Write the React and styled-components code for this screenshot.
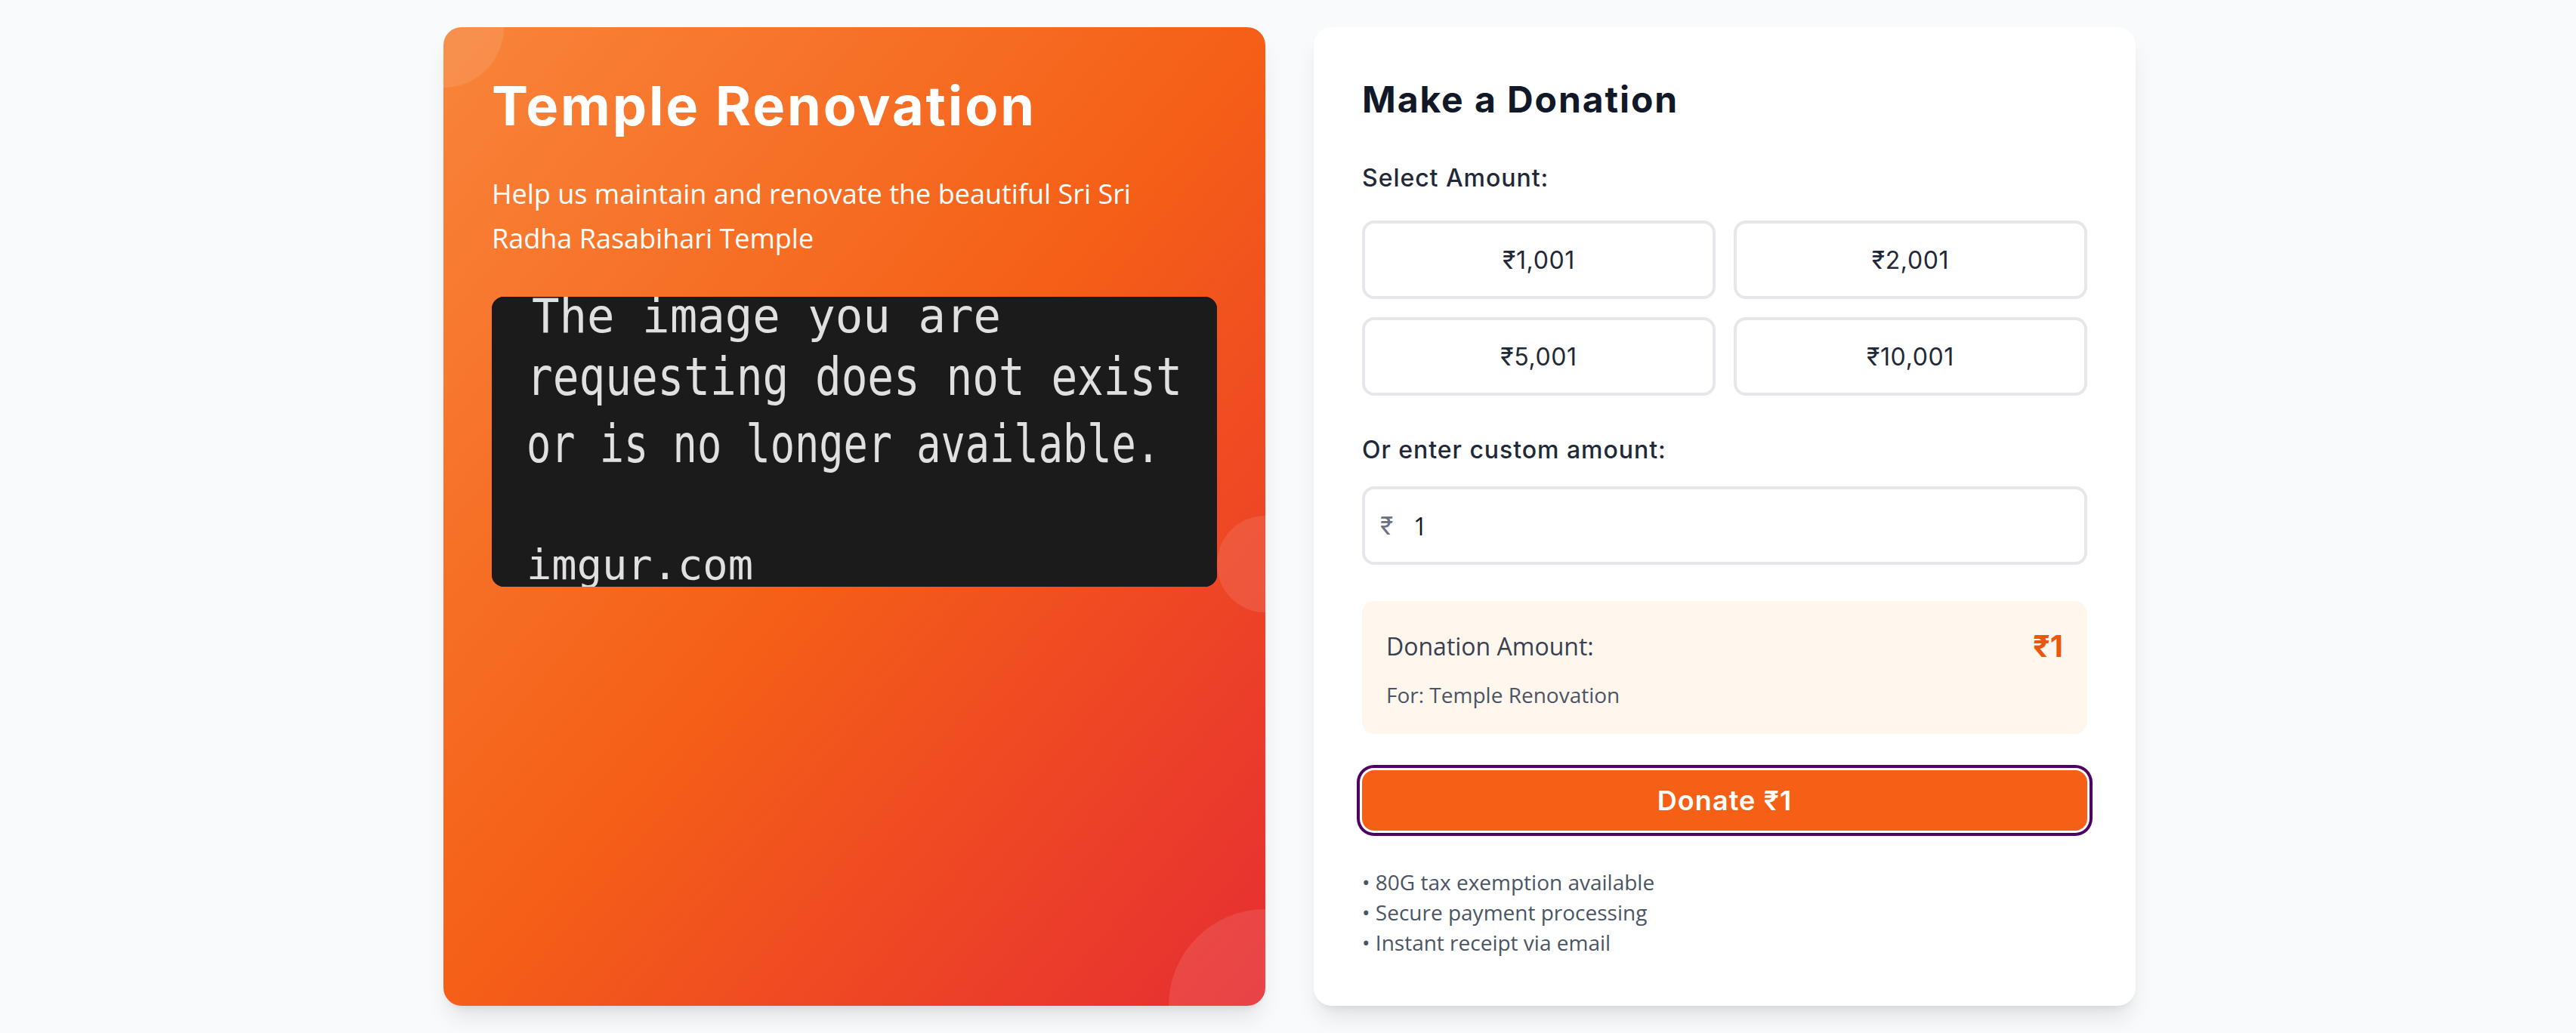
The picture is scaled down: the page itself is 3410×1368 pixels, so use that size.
import React from "react";
import styled, { createGlobalStyle } from "styled-components";

const HEAD = `"Inter", "Noto Sans", sans-serif`;
const BODY = `"Open Sans", "Noto Sans", sans-serif`;

const GlobalStyle = createGlobalStyle`
  * { box-sizing: border-box; }
  html, body {
    margin: 0;
    padding: 0;
    background: #f9fafb;
  }
  body {
    font-family: ${BODY};
  }
`;

const amounts = ["₹1,001", "₹2,001", "₹5,001", "₹10,001"];

// lines of the broken imgur placeholder, in image coordinates
// (glyphs drawn at 56px and stretched up to the tall pixel-font look)
const placeholderLines = [
  { text: "The image you are", x: 53, y: 47, w: 621, sy: 1.12 },
  { text: "requesting does not exist", x: 46, y: 130, w: 868, sy: 1.25 },
  { text: "or is no longer available.", x: 46, y: 219, w: 839, sy: 1.25 },
  { text: "imgur.com", x: 46, y: 374, w: 300, sy: 1.0 },
];

const Page = styled.div`
  display: grid;
  grid-template-columns: 1088px 1088px;
  column-gap: 64px;
  justify-content: center;
  padding: 36px 0 36px 4px;
`;

const Card = styled.section`
  position: relative;
  border-radius: 24px;
  padding: 64px;
  box-shadow: 0 20px 30px -6px rgba(0, 0, 0, 0.1),
    0 8px 12px -8px rgba(0, 0, 0, 0.1);
`;

const HeroCard = styled(Card)`
  overflow: hidden;
  color: #fff;
  background: linear-gradient(
    to bottom right,
    #f8853a 0%,
    #f55f17 50%,
    #e62d33 100%
  );
`;

const Bubble = styled.span`
  position: absolute;
  left: ${(p) => p.$x - p.$size / 2}px;
  top: ${(p) => p.$y - p.$size / 2}px;
  width: ${(p) => p.$size}px;
  height: ${(p) => p.$size}px;
  border-radius: 50%;
  background: rgba(255, 255, 255, 0.1);
  pointer-events: none;
`;

const HeroContent = styled.div`
  position: relative;
  z-index: 1;
`;

const HeroTitle = styled.h1`
  margin: 0 0 48px;
  font-family: ${HEAD};
  font-size: 72px;
  line-height: 80px;
  font-weight: 700;
  letter-spacing: 0.04em;
`;

const HeroText = styled.p`
  margin: 0 0 48px;
  max-width: 880px;
  font-size: 36px;
  line-height: 58.5px;
`;

const ImageFrame = styled.div`
  height: 384px;
  border-radius: 16px;
  overflow: hidden;
  background: #1b1b1b;

  svg {
    display: block;
  }
`;

const FormCard = styled(Card)`
  background: #fff;
`;

const Heading = styled.h2`
  margin: 0 0 48px;
  font-family: ${HEAD};
  font-size: 48px;
  line-height: 64px;
  font-weight: 700;
  letter-spacing: 0.04em;
  color: #111827;
`;

const FieldLabel = styled.label`
  display: block;
  margin-bottom: ${(p) => p.$gap}px;
  font-family: ${HEAD};
  font-size: 32px;
  line-height: 48px;
  font-weight: 500;
  letter-spacing: 0.03em;
  color: #1f2937;
`;

const AmountGrid = styled.div`
  display: grid;
  grid-template-columns: 1fr 1fr;
  gap: 24px;
  margin-bottom: 48px;
`;

const AmountButton = styled.button`
  height: 104px;
  border: 4px solid #e5e7eb;
  border-radius: 16px;
  background: #fff;
  font-family: ${HEAD};
  font-size: 32px;
  font-weight: 400;
  letter-spacing: 0.02em;
  color: #1f2937;
  cursor: pointer;
`;

const InputWrap = styled.div`
  position: relative;
  margin-bottom: 48px;
`;

const RupeeSign = styled.span`
  position: absolute;
  left: 24px;
  top: 50%;
  transform: translateY(-50%);
  font-family: ${HEAD};
  font-size: 32px;
  color: #6b7280;
`;

const AmountInput = styled.input`
  display: block;
  width: 100%;
  height: 104px;
  padding: 0 24px 0 64px;
  border: 4px solid #e5e7eb;
  border-radius: 16px;
  font-family: ${BODY};
  font-size: 32px;
  color: #111827;
  outline: none;
  -moz-appearance: textfield;

  &::-webkit-outer-spin-button,
  &::-webkit-inner-spin-button {
    -webkit-appearance: none;
    margin: 0;
  }
`;

const Summary = styled.div`
  margin-bottom: 48px;
  padding: 32px;
  border-radius: 16px;
  background: #fff7ed;
`;

const SummaryRow = styled.div`
  display: flex;
  justify-content: space-between;
  align-items: center;
  height: 56px;
`;

const SummaryLabel = styled.span`
  font-size: 32px;
  line-height: 48px;
  font-weight: 500;
  color: #374151;
`;

const SummaryValue = styled.span`
  font-family: ${HEAD};
  font-size: 40px;
  line-height: 56px;
  font-weight: 700;
  color: #ea580c;
`;

const SummaryNote = styled.p`
  margin: 16px 0 0;
  font-size: 28px;
  line-height: 40px;
  color: #4b5563;
`;

const DonateButton = styled.button`
  display: block;
  width: 100%;
  height: 80px;
  margin-bottom: 48px;
  border: 0;
  border-radius: 16px;
  background: #f56016;
  color: #fff;
  font-family: ${HEAD};
  font-size: 36px;
  font-weight: 600;
  letter-spacing: 0.03em;
  cursor: pointer;
  box-shadow: 0 0 0 3px #fff, 0 0 0 7px #4f0064;
`;

const Perks = styled.ul`
  list-style: none;
  margin: 0;
  padding: 0;
  font-size: 28px;
  line-height: 40px;
  color: #4b5563;
`;

const Perk = styled.li`
  &::before {
    content: "• ";
  }
`;

const Placeholder = () => (
  <svg width="960" height="384" viewBox="0 0 960 384">
    <rect width="960" height="384" fill="#1b1b1b" />
    {placeholderLines.map((l) => (
      <text
        key={l.text}
        transform={`translate(${l.x} ${l.y}) scale(1 ${l.sy})`}
        textLength={l.w}
        lengthAdjust="spacingAndGlyphs"
        fontFamily="DejaVu Sans Mono, Liberation Mono, monospace"
        fontSize="56"
        fill="#e0e0e0"
      >
        {l.text}
      </text>
    ))}
  </svg>
);

const App = () => {
  return (
    <>
      <GlobalStyle />
      <Page>
        <HeroCard>
          <Bubble $x={0} $y={0} $size={160} />
          <Bubble $x={1088} $y={711} $size={128} />
          <Bubble $x={1088} $y={1296} $size={256} />
          <HeroContent>
            <HeroTitle>Temple Renovation</HeroTitle>
            <HeroText>
              Help us maintain and renovate the beautiful Sri Sri Radha
              Rasabihari Temple
            </HeroText>
            <ImageFrame>
              <Placeholder />
            </ImageFrame>
          </HeroContent>
        </HeroCard>

        <FormCard>
          <Heading>Make a Donation</Heading>

          <FieldLabel $gap={32}>Select Amount:</FieldLabel>
          <AmountGrid>
            {amounts.map((a) => (
              <AmountButton key={a} type="button">
                {a}
              </AmountButton>
            ))}
          </AmountGrid>

          <FieldLabel $gap={24}>Or enter custom amount:</FieldLabel>
          <InputWrap>
            <RupeeSign>₹</RupeeSign>
            <AmountInput type="number" defaultValue="1" />
          </InputWrap>

          <Summary>
            <SummaryRow>
              <SummaryLabel>Donation Amount:</SummaryLabel>
              <SummaryValue>₹1</SummaryValue>
            </SummaryRow>
            <SummaryNote>For: Temple Renovation</SummaryNote>
          </Summary>

          <DonateButton type="button">Donate ₹1</DonateButton>

          <Perks>
            <Perk>80G tax exemption available</Perk>
            <Perk>Secure payment processing</Perk>
            <Perk>Instant receipt via email</Perk>
          </Perks>
        </FormCard>
      </Page>
    </>
  );
};

export default App;
